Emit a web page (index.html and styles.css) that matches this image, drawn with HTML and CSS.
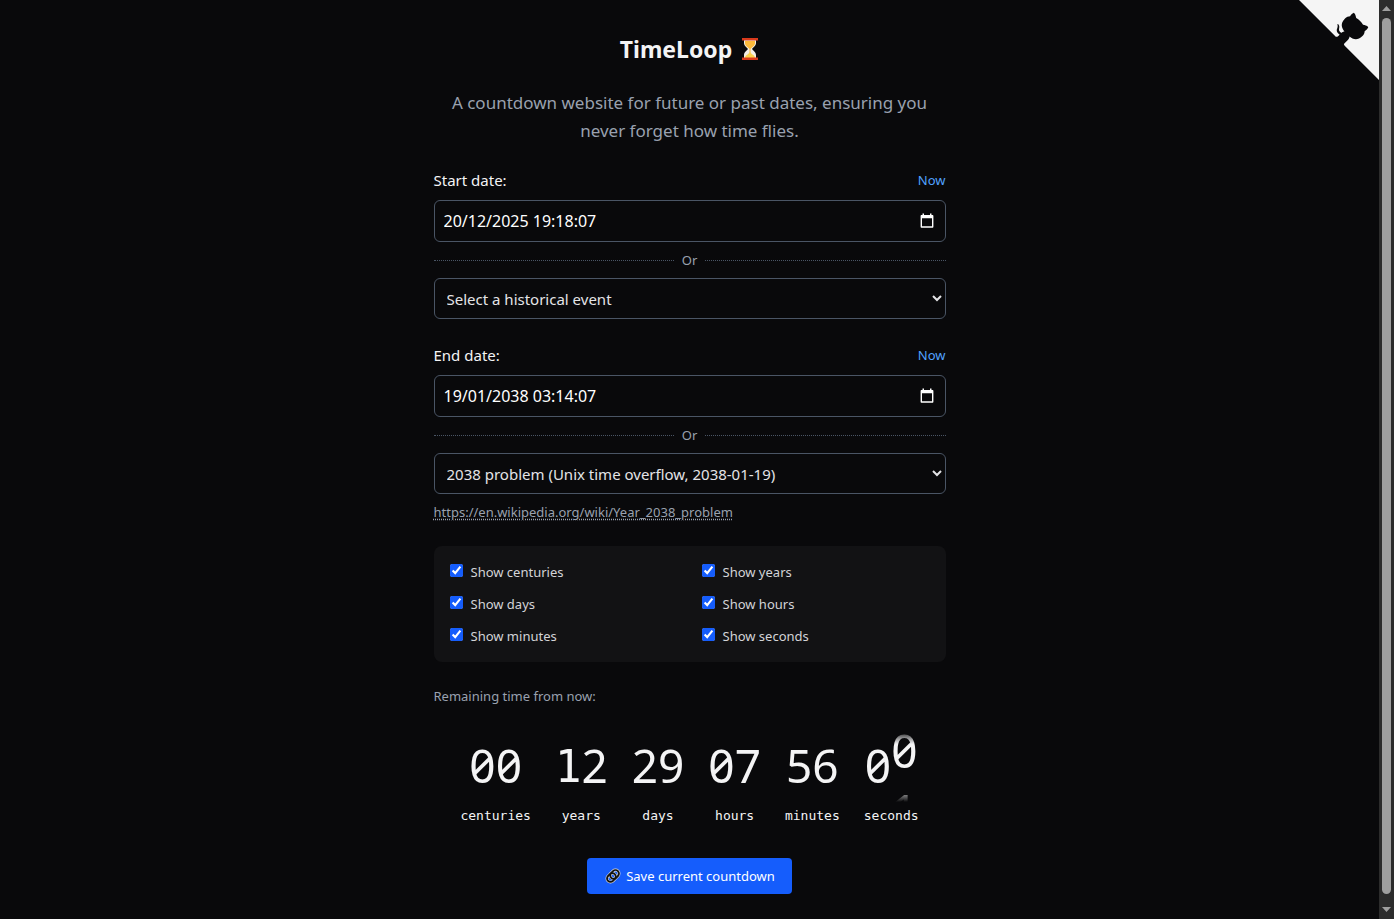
FILE: index.html
```
<!DOCTYPE html>
<html lang="en">

<head>
    <meta charset="UTF-8">
    <meta name="viewport" content="width=device-width, initial-scale=1.0">
    <title>TimeLoop</title>
    <link rel="stylesheet" href="styles.css">
</head>

<body>
    <div class="page">
        <a class="github-corner" href="#" aria-label="View source on GitHub">
            <svg width="80" height="80" viewBox="0 0 250 250" aria-hidden="true">
                <path class="corner-bg" d="M0,0 L115,115 L130,115 L142,142 L250,250 L250,0 Z"></path>
                <path class="corner-cat" d="M128.3,109.0 C113.8,99.7 119.0,89.6 119.0,89.6 C122.0,82.7 120.5,78.6 120.5,78.6 C119.2,72.0 123.4,76.3 123.4,76.3 C127.3,80.9 125.5,87.3 125.5,87.3 C122.9,97.6 130.6,101.9 134.4,103.2"></path>
                <path class="corner-cat" d="M115.0,115.0 C114.9,115.1 118.7,116.5 119.8,115.4 L133.7,101.6 C136.9,99.2 139.9,98.4 142.2,98.6 C133.8,88.0 127.5,74.4 143.8,58.0 C148.5,53.4 154.0,51.2 159.7,51.0 C160.3,49.4 163.2,43.6 171.4,40.1 C171.4,40.1 176.1,42.5 178.8,56.2 C183.1,58.6 187.2,61.8 190.9,65.4 C194.5,69.0 197.7,73.2 200.1,77.6 C213.8,80.2 216.3,84.9 216.3,84.9 C212.7,93.1 206.9,96.0 205.4,96.6 C205.1,102.4 203.0,107.8 198.3,112.5 C181.9,128.9 168.3,122.5 157.7,114.1 C157.9,116.9 156.7,120.9 152.7,124.9 L141.0,136.5 C139.8,137.7 141.6,141.9 141.8,141.8 Z"></path>
            </svg>
        </a>

        <main class="container">
            <h1>
                TimeLoop
                <svg class="hourglass" width="18" height="24" viewBox="0 0 18 24" aria-hidden="true">
                    <path d="M3 3h12v3c0 3-3 4.500-4 6 1 1.500 4 3 4 6v3H3v-3c0-3 3-4.500 4-6-1-1.500-4-3-4-6z" fill="#f3eee6"></path>
                    <path d="M4 4h10v2c0 3-3 4-4.500 6V19H8.500V12C7 10 4 9 4 6z" fill="#fcb93a"></path>
                    <path d="M4 21c0-3 3-3 5-6 2 3 5 3 5 6z" fill="#fcd34d"></path>
                    <path d="M1 1h16v2.500H1zM1 20.500h16V23H1z" fill="#d93a1c"></path>
                </svg>
            </h1>
            <p class="subtitle">A countdown website for future or past dates, ensuring you never forget how time flies.</p>

            <section class="field">
                <div class="field-head">
                    <label for="startDate">Start date:</label>
                    <button type="button" class="now">Now</button>
                </div>
                <div class="date-box">
                    <input type="text" id="startDate" value="20/12/2025 19:18:07">
                    <button type="button" class="picker" aria-label="Open calendar">
                        <svg width="14" height="16" viewBox="0 0 14 16" aria-hidden="true">
                            <path d="M2.500 .5H4V2h6V.5h1.500V2h.9c.6 0 1 .4 1 1v10.700c0 .6-.4 1-1 1H1.600c-.6 0-1-.4-1-1V3c0-.6.4-1 1-1h.9zM2 5.300v8h10v-8z" fill="#fff"></path>
                        </svg>
                    </button>
                </div>
                <div class="divider">Or</div>
                <select id="startEvent" aria-label="Start event">
                    <option>Select a historical event</option>
                </select>
            </section>

            <section class="field">
                <div class="field-head">
                    <label for="endDate">End date:</label>
                    <button type="button" class="now">Now</button>
                </div>
                <div class="date-box">
                    <input type="text" id="endDate" value="19/01/2038 03:14:07">
                    <button type="button" class="picker" aria-label="Open calendar">
                        <svg width="14" height="16" viewBox="0 0 14 16" aria-hidden="true">
                            <path d="M2.500 .5H4V2h6V.5h1.500V2h.9c.6 0 1 .4 1 1v10.700c0 .6-.4 1-1 1H1.600c-.6 0-1-.4-1-1V3c0-.6.4-1 1-1h.9zM2 5.300v8h10v-8z" fill="#fff"></path>
                        </svg>
                    </button>
                </div>
                <div class="divider">Or</div>
                <select id="endEvent" aria-label="End event">
                    <option>2038 problem (Unix time overflow, 2038-01-19)</option>
                </select>
                <a class="event-link" href="https://en.wikipedia.org/wiki/Year_2038_problem">https://en.wikipedia.org/wiki/Year_2038_problem</a>
            </section>

            <div class="options">
                <label><input type="checkbox" checked>Show centuries</label>
                <label><input type="checkbox" checked>Show years</label>
                <label><input type="checkbox" checked>Show days</label>
                <label><input type="checkbox" checked>Show hours</label>
                <label><input type="checkbox" checked>Show minutes</label>
                <label><input type="checkbox" checked>Show seconds</label>
            </div>

            <p class="remaining">Remaining time from now:</p>

            <div class="countdown">
                <div class="unit">
                    <div class="digits"><span>0</span><span>0</span></div>
                    <div class="unit-name">centuries</div>
                </div>
                <div class="unit">
                    <div class="digits"><span class="one">1</span><span>2</span></div>
                    <div class="unit-name">years</div>
                </div>
                <div class="unit">
                    <div class="digits"><span>2</span><span>9</span></div>
                    <div class="unit-name">days</div>
                </div>
                <div class="unit">
                    <div class="digits"><span>0</span><span>7</span></div>
                    <div class="unit-name">hours</div>
                </div>
                <div class="unit">
                    <div class="digits"><span>5</span><span>6</span></div>
                    <div class="unit-name">minutes</div>
                </div>
                <div class="unit">
                    <div class="digits">
                        <span>0</span>
                        <div class="reel rolling"><span>0</span><span>1</span></div>
                    </div>
                    <div class="unit-name">seconds</div>
                </div>
            </div>

            <button type="button" class="save">
                <svg width="18" height="18" viewBox="0 0 18 18" aria-hidden="true">
                    <g transform="rotate(-45 9 9)" fill="none">
                        <rect x="2" y="5.500" width="9.500" height="7" rx="3.500" stroke="#ddd" stroke-width="3"></rect>
                        <rect x="6.500" y="5.500" width="9.500" height="7" rx="3.500" stroke="#ddd" stroke-width="3"></rect>
                        <rect x="2" y="5.500" width="9.500" height="7" rx="3.500" stroke="#111" stroke-width="1.800"></rect>
                        <rect x="6.500" y="5.500" width="9.500" height="7" rx="3.500" stroke="#111" stroke-width="1.800"></rect>
                    </g>
                </svg>
                Save current countdown
            </button>
        </main>
    </div>

    <div class="scrollbar" aria-hidden="true">
        <svg width="9" height="5" viewBox="0 0 9 5"><path d="M4.500 0L9 5H0z"></path></svg>
        <div class="thumb"></div>
        <svg width="9" height="5" viewBox="0 0 9 5"><path d="M0 0h9L4.500 5z"></path></svg>
    </div>
</body>

</html>
```
FILE: styles.css
```
* {
    box-sizing: border-box;
}

body {
    display: flex;
    height: 100vh;
    margin: 0;
    overflow: hidden;
    background-color: #09090b;
    color: #f4f4f5;
    color-scheme: dark;
    font-family: "Noto Sans", sans-serif;
    font-size: 15px;
    line-height: 24px;
}

input,
select,
button {
    font-family: inherit;
    font-size: 15px;
    line-height: 24px;
}

button {
    border: none;
    background: none;
    cursor: pointer;
}

.page {
    position: relative;
    flex: 1;
}

.github-corner {
    position: absolute;
    top: 0;
    right: 0;
}

.github-corner svg {
    display: block;
}

.corner-bg {
    fill: #f5f5f5;
}

.corner-cat {
    fill: #09090b;
}

.container {
    display: flex;
    flex-direction: column;
    max-width: 512px;
    margin: 0 auto;
    padding: 33px 0 24px;
}

h1 {
    display: flex;
    align-items: center;
    justify-content: center;
    gap: 9px;
    margin: 0;
    font-size: 23px;
    line-height: 32px;
}

.subtitle {
    margin: 24px 0 23px;
    color: #99a1af;
    font-size: 17px;
    line-height: 28px;
    text-align: center;
}

.field {
    margin-bottom: 24px;
}

.field-head {
    display: flex;
    justify-content: space-between;
    margin-bottom: 8px;
}

.now {
    padding: 0;
    color: #51a2ff;
    font-size: 13px;
}

.date-box {
    display: flex;
    align-items: center;
    height: 42px;
    padding: 0 11px 0 9px;
    border: 1px solid #4a5565;
    border-radius: 6px;
}

.date-box input {
    flex: 1;
    min-width: 0;
    padding: 0;
    border: none;
    outline: none;
    background: none;
    color: #fff;
    font-size: 16px;
}

.picker {
    display: flex;
    padding: 0;
}

.divider {
    display: flex;
    align-items: center;
    gap: 8px;
    margin: 8px 0;
    color: #99a1af;
    font-size: 13px;
    line-height: 20px;
}

.divider::before,
.divider::after {
    content: "";
    flex: 1;
    border-top: 1px dotted #4a5565;
}

select {
    display: block;
    width: 100%;
    height: 41px;
    padding: 0 8px;
    border: 1px solid #4a5565;
    border-radius: 6px;
    background-color: #09090b;
    color: #e4e4e7;
}

.event-link {
    display: block;
    width: fit-content;
    margin-top: 8px;
    color: #99a1af;
    font-size: 13px;
    line-height: 20px;
    text-decoration: underline dotted;
    text-underline-offset: 2px;
}

.options {
    display: grid;
    grid-template-columns: 1fr 1fr;
    gap: 12px 24px;
    padding: 16px;
    border-radius: 8px;
    background-color: #121214;
    color: #d4d4d8;
    font-size: 13px;
    line-height: 20px;
}

.options label {
    display: flex;
    gap: 8px;
}

.options input {
    width: 13px;
    height: 13px;
    margin: 2px 0 0;
    accent-color: #155dfc;
    color-scheme: light;
}

.remaining {
    margin: 24px 0;
    color: #99a1af;
    font-size: 13px;
    line-height: 20px;
}

.countdown {
    display: flex;
    justify-content: center;
    gap: 24px;
}

.unit {
    display: flex;
    flex-direction: column;
    align-items: center;
}

.digits {
    display: flex;
    height: 72px;
    overflow: hidden;
    font-size: 46px;
    font-variant-numeric: slashed-zero;
    line-height: 70px;
    mask-image: linear-gradient(transparent, #000 14px, #000 58px, transparent);
}

.digits .one {
    font-family: "DejaVu Sans Mono", monospace;
    font-size: 44px;
    line-height: 74px;
}

.reel {
    display: flex;
    flex-direction: column;
    line-height: 60px;
}

.rolling {
    transform: translateY(-10px);
}

.unit-name {
    font-family: "DejaVu Sans Mono", monospace;
    font-size: 13px;
    line-height: 28px;
}

.save {
    display: flex;
    align-items: center;
    align-self: center;
    gap: 4px;
    height: 36px;
    margin-top: 28px;
    padding: 0 17px;
    border-radius: 4px;
    background-color: #155dfc;
    color: #fff;
    font-size: 13px;
}

.scrollbar {
    display: flex;
    flex-direction: column;
    align-items: center;
    gap: 7px;
    width: 15px;
    padding: 6px 0 7px;
    background-color: #2c2c2c;
    fill: #9f9f9f;
}

.thumb {
    flex: 1;
    width: 9px;
    margin-bottom: 6px;
    border-radius: 5px;
    background-color: #9f9f9f;
}
```
